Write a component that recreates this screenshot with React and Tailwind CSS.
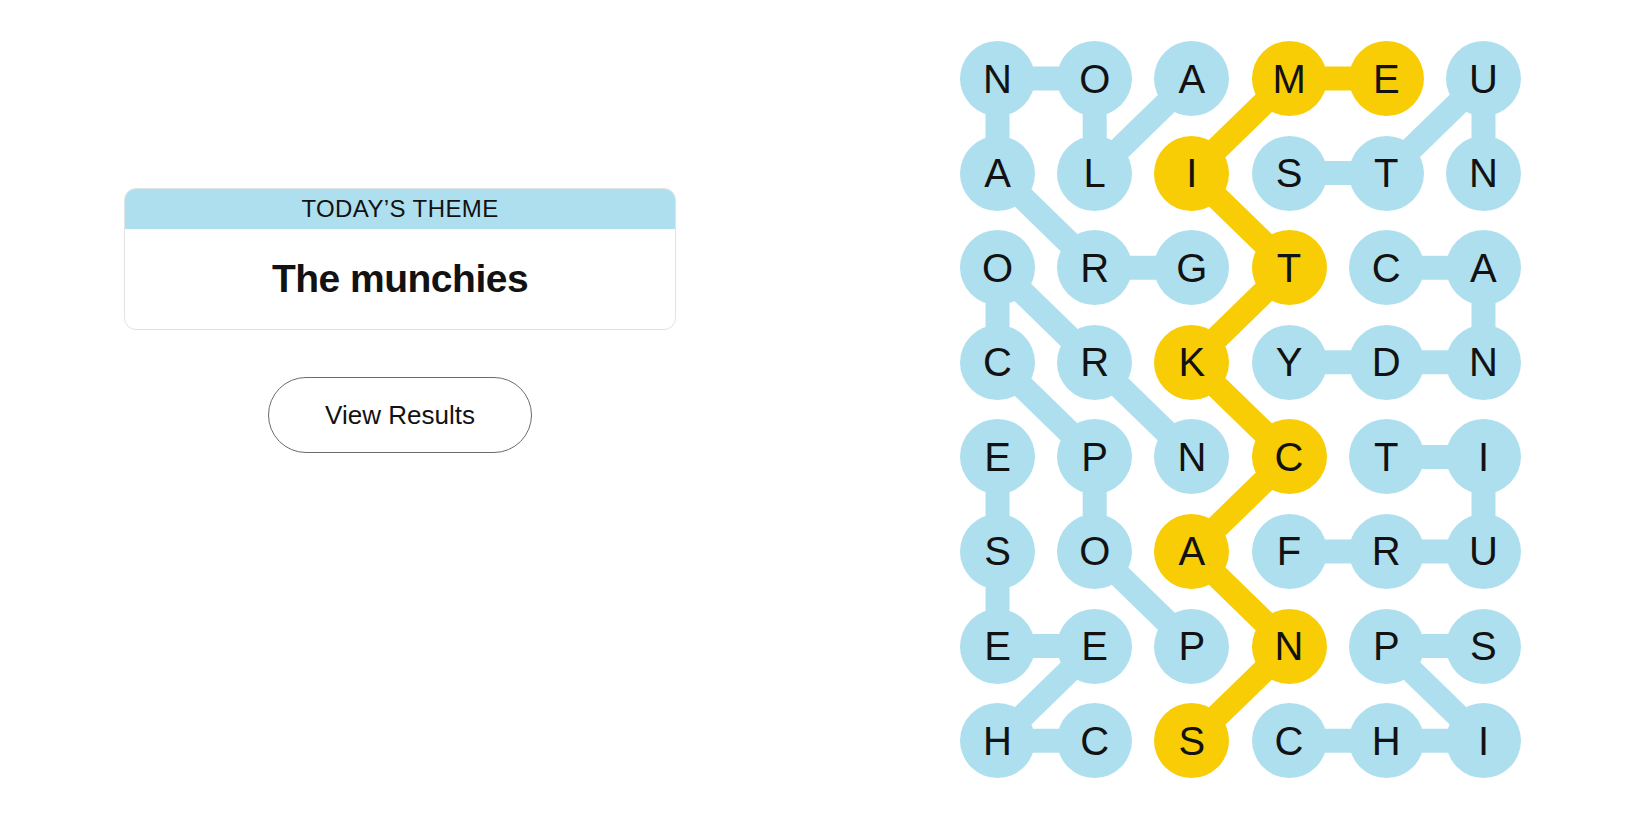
import React from "react";

const GRID = [
  "NOAMEU",
  "ALISTN",
  "ORGTCA",
  "CRKYDN",
  "EPNCTI",
  "SOAFRU",
  "EEPNPS",
  "HCSCHI",
];

const CELL = 75;
const STEP_X = 97.2;
const STEP_Y = 94.6;

// paths of found words, as [row, col] in order
const WORDS = [
  { cells: [[2, 2], [2, 1], [1, 0], [0, 0], [0, 1], [1, 1], [0, 2]] },
  { cells: [[1, 5], [0, 5], [1, 4], [1, 3]] },
  { cells: [[2, 4], [2, 5], [3, 5], [3, 4], [3, 3]] },
  { cells: [[6, 2], [5, 1], [4, 1], [3, 0], [2, 0], [3, 1], [4, 2]] },
  { cells: [[7, 1], [7, 0], [6, 1], [6, 0], [5, 0], [4, 0]] },
  { cells: [[5, 3], [5, 4], [5, 5], [4, 5], [4, 4]] },
  { cells: [[7, 3], [7, 4], [7, 5], [6, 4], [6, 5]] },
  {
    spangram: true,
    cells: [[7, 2], [6, 3], [5, 2], [4, 3], [3, 2], [2, 3], [1, 2], [0, 3], [0, 4]],
  },
];

const spanSet = new Set(
  WORDS.filter((w) => w.spangram).flatMap((w) => w.cells.map(([r, c]) => `${r}-${c}`))
);

const center = (r, c) => [c * STEP_X + CELL / 2, r * STEP_Y + CELL / 2];

const Board = () => {
  const width = 5 * STEP_X + CELL;
  const height = 7 * STEP_Y + CELL;

  return (
    <div className="relative">
      <svg
        className="absolute inset-0"
        width={width}
        height={height}
        viewBox={`0 0 ${width} ${height}`}
      >
        {WORDS.map((word, wi) =>
          word.cells.slice(1).map((cell, i) => {
            const [x1, y1] = center(...word.cells[i]);
            const [x2, y2] = center(...cell);
            return (
              <line
                key={`${wi}-${i}`}
                x1={x1}
                y1={y1}
                x2={x2}
                y2={y2}
                stroke={word.spangram ? "#f8cd05" : "#aedfee"}
                strokeWidth="24"
              />
            );
          })
        )}
      </svg>

      <div className="relative grid grid-cols-[repeat(6,75px)] gap-x-[22.2px] gap-y-[19.6px]">
        {GRID.map((row, r) =>
          row.split("").map((letter, c) => (
            <div
              key={`${r}-${c}`}
              className={`w-[75px] h-[75px] rounded-full flex items-center justify-center text-[40px] leading-none text-[#121212] ${
                spanSet.has(`${r}-${c}`) ? "bg-[#f8cd05]" : "bg-[#aedfee]"
              }`}
            >
              {letter}
            </div>
          ))
        )}
      </div>
    </div>
  );
};

const App = () => {
  return (
    <div
      className="flex w-full h-[825px] bg-white overflow-hidden"
      style={{ fontFamily: '"Liberation Sans", Arial, sans-serif' }}
    >
      <div className="w-[800px] flex flex-col items-center pt-[188px]">
        <div className="w-[552px] h-[142px] rounded-[12px] border border-[#e2e2e2] overflow-hidden flex flex-col">
          <div className="h-[40px] bg-[#aedfee] flex items-center justify-center text-[24px] tracking-[0.4px] text-[#121212]">
            TODAY’S THEME
          </div>
          <div className="flex-1 flex items-center justify-center text-[39px] font-bold tracking-[-0.5px] text-[#121212]">
            The munchies
          </div>
        </div>

        <button
          type="button"
          className="mt-[47px] w-[264px] h-[76px] rounded-full border border-[#6b6b6b] bg-white text-[26px] text-[#121212]"
        >
          View Results
        </button>
      </div>

      <div className="pt-[41px] pl-[160px]">
        <Board />
      </div>
    </div>
  );
};

export default App;
